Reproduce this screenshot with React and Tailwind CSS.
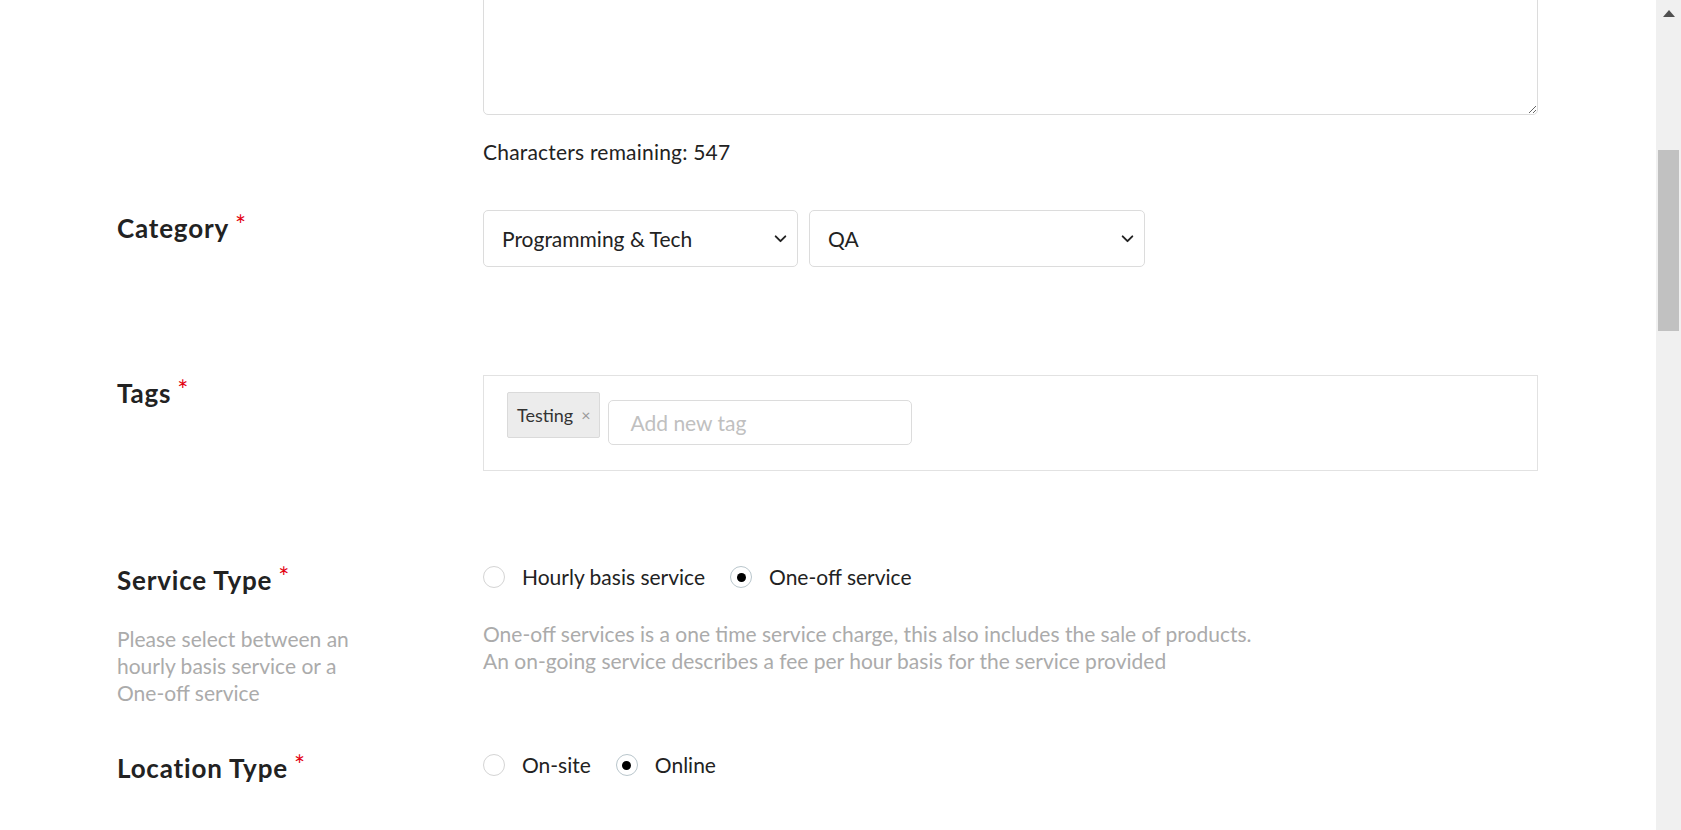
import React from "react";

function Label({ children }) {
  return (
    <div className="text-[26px] leading-[36px] font-bold text-[#222] tracking-[0.8px]">
      {children}
      <span className="text-[#e3000f] text-[26px] font-normal relative -top-[3px] ml-[6px]">*</span>
    </div>
  );
}

function Chevron() {
  return (
    <svg width="15" height="15" viewBox="0 0 14 14" className="shrink-0">
      <path d="M2.5 5 L7 9.5 L11.5 5" fill="none" stroke="#222" strokeWidth="1.8" strokeLinecap="round" strokeLinejoin="round" />
    </svg>
  );
}

function Select({ value, width }) {
  return (
    <div className={`${width} h-[57px] border border-[#dcdcdc] rounded-[5px] flex items-center justify-between pl-[18px] pr-[9px] text-[21px] text-[#222] bg-white`}>
      <span>{value}</span>
      <Chevron />
    </div>
  );
}

function Radio({ checked, label }) {
  return (
    <div className="flex items-center">
      <span className={`w-[22px] h-[22px] rounded-full border flex items-center justify-center bg-white ${checked ? "border-[#b9c6cc]" : "border-[#d4d4d4]"}`}>
        {checked && <span className="w-[9px] h-[9px] rounded-full bg-black" />}
      </span>
      <span className="ml-[17px] text-[21px] leading-[30px] text-[#222]">{label}</span>
    </div>
  );
}

export default function App() {
  return (
    <div className="w-[1681px] h-[830px] overflow-hidden flex bg-white" style={{ fontFamily: "Lato, 'Open Sans', sans-serif" }}>
      <div className="flex-1 overflow-hidden pl-[117px]">
        <div className="grid grid-cols-[366px_1055px]">
          {/* textarea row */}
          <div />
          <div>
            <textarea className="block w-full h-[145px] -mt-[30px] border border-[#dcdcdc] rounded-[5px] outline-none resize-y" />
            <div className="mt-[23px] text-[21px] leading-[28px] tracking-[0.2px] text-[#222]">Characters remaining: 547</div>
          </div>

          {/* category */}
          <div className="mt-[44px]">
            <Label>Category</Label>
          </div>
          <div className="mt-[44px] flex gap-[11px]">
            <Select value="Programming & Tech" width="w-[315px]" />
            <Select value="QA" width="w-[336px]" />
          </div>

          {/* tags */}
          <div className="mt-[108px]">
            <Label>Tags</Label>
          </div>
          <div className="mt-[108px]">
            <div className="h-[96px] border border-[#e2e2e2] flex items-start pl-[23px] pt-[16px] gap-[8px]">
              <div className="h-[46px] pl-[9px] pr-[8px] bg-[#ececec] border border-[#dadada] rounded-[2px] flex items-center text-[18px] text-[#333]">
                Testing<span className="ml-[8px] text-[#999] text-[16px]">×</span>
              </div>
              <div className="mt-[8px] w-[304px] h-[45px] border border-[#dcdcdc] rounded-[5px] flex items-center pl-[22px] text-[21px] text-[#c0c0c0]">
                Add new tag
              </div>
            </div>
          </div>

          {/* service type */}
          <div className="mt-[91px]">
            <Label>Service Type</Label>
            <div className="mt-[27px] w-[245px] text-[21px] leading-[27px] text-[#ababab]">
              Please select between an hourly basis service or a One-off service
            </div>
          </div>
          <div className="mt-[91px]">
            <div className="flex items-center h-[30px]">
              <Radio label="Hourly basis service" />
              <div className="ml-[25px]">
                <Radio checked label="One-off service" />
              </div>
            </div>
            <div className="mt-[28px] text-[21px] leading-[27px] text-[#ababab]">
              <div>One-off services is a one time service charge, this also includes the sale of products.</div>
              <div>An on-going service describes a fee per hour basis for the service provided</div>
            </div>
          </div>

          {/* location type */}
          <div className="mt-[44px]">
            <Label>Location Type</Label>
          </div>
          <div className="mt-[44px]">
            <div className="flex items-center h-[30px]">
              <Radio label="On-site" />
              <div className="ml-[25px]">
                <Radio checked label="Online" />
              </div>
            </div>
          </div>
        </div>
      </div>

      {/* scrollbar */}
      <div className="w-[25px] h-full bg-[#f0f0f0] flex flex-col items-center">
        <div className="h-[26px] flex items-center justify-center">
          <svg width="12" height="7" viewBox="0 0 12 7"><path d="M0 7 L6 0 L12 7 Z" fill="#505050" /></svg>
        </div>
        <div className="mt-[124px] w-[21px] h-[181px] bg-[#c1c1c1]" />
      </div>
    </div>
  );
}
